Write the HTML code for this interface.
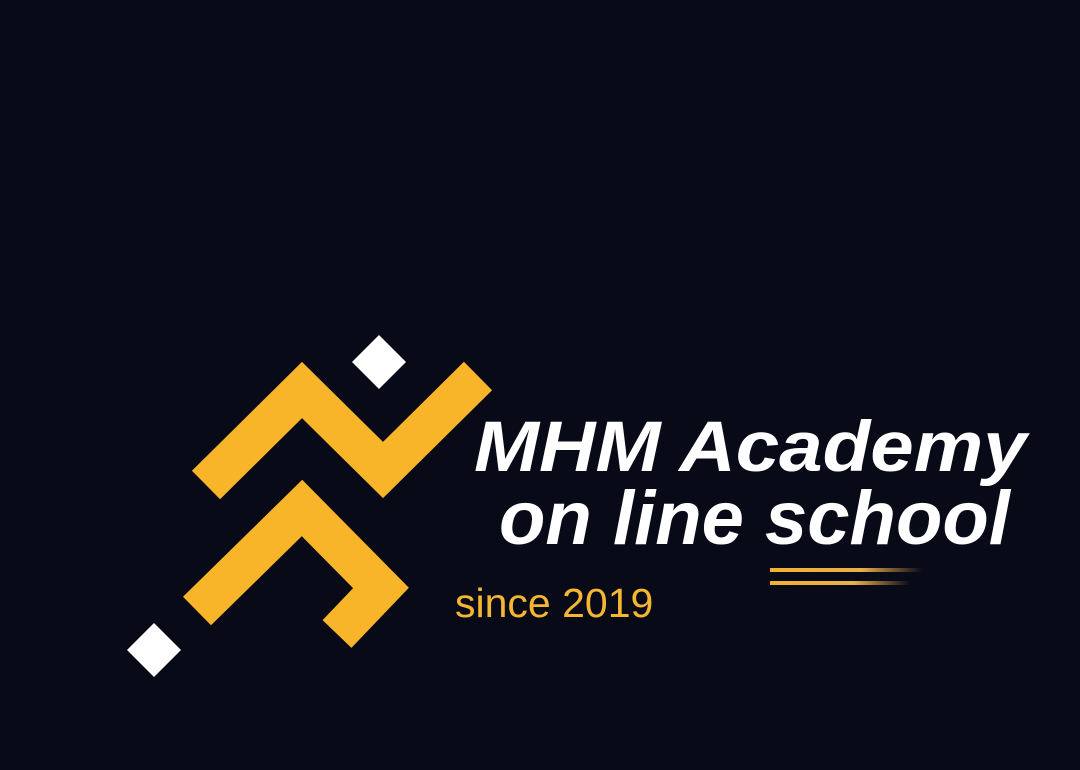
<!DOCTYPE html>
<html><head><meta charset="utf-8"><style>
html,body{margin:0;padding:0;background:#090a17;}
body{width:1080px;height:770px;position:relative;overflow:hidden;font-family:"Liberation Sans",sans-serif;}
.t{position:absolute;color:#fff;font-weight:bold;font-style:italic;white-space:nowrap;line-height:1;}
</style></head><body>
<svg width="1080" height="770" style="position:absolute;left:0;top:0">
<defs>
<linearGradient id="g" x1="0" x2="1"><stop offset="0" stop-color="#f4b12e"/><stop offset="0.6" stop-color="#e8b04a"/><stop offset="1" stop-color="#e8b04a" stop-opacity="0"/></linearGradient>
</defs>
<g fill="none" stroke="#f9b52a" stroke-width="40" stroke-linejoin="miter" stroke-miterlimit="10">
<polyline points="206,485 302,390 383,470 478,376"/>
<polyline points="197,611 302,508 381,588 337,634"/>
</g>
<polygon points="379,335 406,362 379,389 352,362" fill="#fff"/>
<polygon points="154,623 181,650 154,677 127,650" fill="#fff"/>
<rect x="770" y="568" width="152" height="4" fill="url(#g)"/>
<rect x="770" y="581" width="140" height="4" fill="url(#g)"/>
</svg>
<div class="t" style="left:474px;top:412px;font-size:71px;transform:scaleX(1.1);transform-origin:0 0;">MHM Academy</div>
<div class="t" style="left:499px;top:481px;font-size:76px;">on line school</div>
<div style="position:absolute;left:455px;top:583px;font-size:41px;color:#f5b731;line-height:1;white-space:nowrap;">since 2019</div>
</body></html>
